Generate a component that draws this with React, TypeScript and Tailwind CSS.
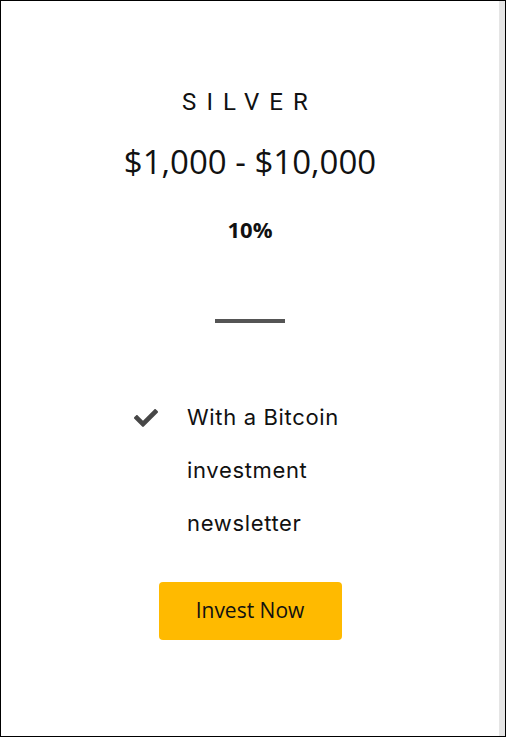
import React from "react";
import { FaCheck } from "react-icons/fa";

export default function App() {
  return (
    <div className="w-[506px] h-[737px] border border-black flex bg-white">
      <div className="w-[498px] flex flex-col items-center pt-[85px]">
        <div className="font-['Roboto',sans-serif] text-[24px] leading-[32px] tracking-[0.42em] text-[#111]">
          SILVER
        </div>
        <div className="mt-[24px] font-['Open_Sans',sans-serif] text-[33px] leading-[40px] text-[#111]">
          $1,000 - $10,000
        </div>
        <div className="mt-[32px] font-['Open_Sans',sans-serif] font-bold text-[22px] leading-[30px] text-[#111]">
          10%
        </div>
        <div className="mt-[75px] w-[70px] h-[4px] bg-[#555555]" />
        <ul className="mt-[68px] self-start ml-[133px] flex items-start gap-[29px]">
          <li className="h-[53px] flex items-center">
            <FaCheck size={24} color="#474747" />
          </li>
          <li className="w-[180px] font-['Inter',sans-serif] text-[22px] tracking-[0.03em] leading-[53px] text-[#111]">
            With a Bitcoin investment newsletter
          </li>
        </ul>
        <button className="mt-[32px] w-[183px] h-[58px] rounded-[4px] bg-[#ffba00] font-['Open_Sans',sans-serif] text-[21px] text-[#111]">
          Invest Now
        </button>
      </div>
      <div className="w-[6px] bg-[#e5e5e5]" />
    </div>
  );
}
